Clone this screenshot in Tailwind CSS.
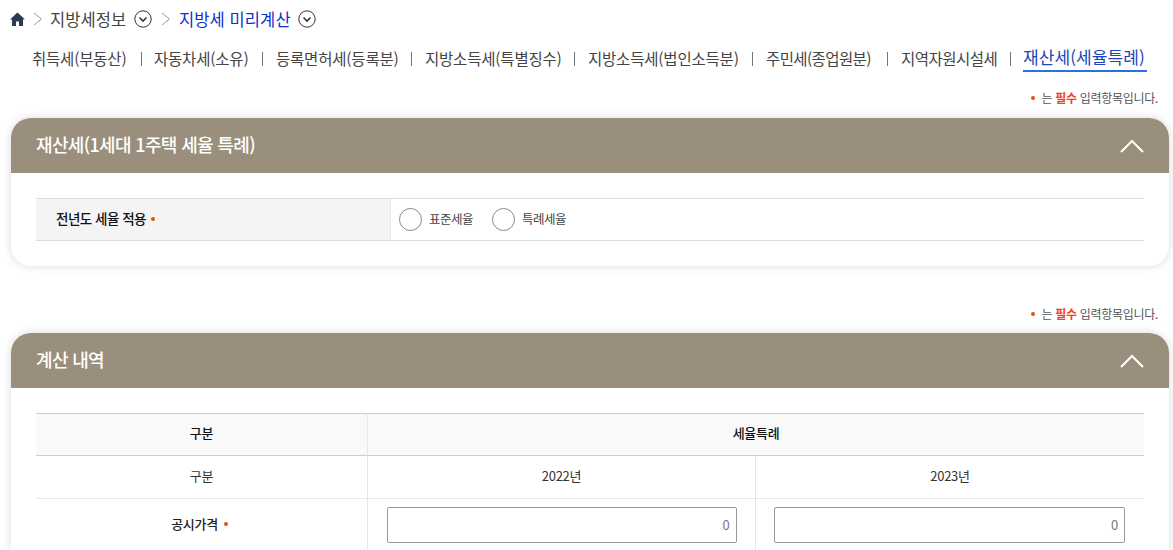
<!DOCTYPE html>
<html lang="ko">
<head>
  <meta charset="UTF-8" />
  <title>지방세 미리계산</title>
  <script src="https://cdn.jsdelivr.net/npm/@tailwindcss/browser@4"></script>
</head>
<body class="bg-white h-[550px] overflow-hidden font-['Noto_Sans_CJK_KR','Noto_Sans',sans-serif] text-[#333]">

  <!-- BREADCRUMB -->
  <nav class="flex items-center h-[38px] pl-[10px] text-[16.5px] whitespace-nowrap">
    <svg class="w-[15px] h-[14px] mr-[8px]" viewBox="0 0 15 14"><path d="M7.5 0.5 L15 7.5 H13 V14 H9 V9.5 H6 V14 H2 V7.5 H0 Z" fill="#2b3a55"/></svg>
    <svg class="w-[10px] h-[14px] mr-[7px]" viewBox="0 0 10 14"><path d="M1 1 L8.5 7 L1 13" fill="none" stroke="#999" stroke-width="1"/></svg>
    <span class="text-[#444] tracking-[0.1px] w-[78px]">지방세정보</span>
    <svg class="w-[18px] h-[18px] ml-[6px] mr-[9px]" viewBox="0 0 18 18"><circle cx="9" cy="9" r="8.2" fill="none" stroke="#333"/><path d="M5.5 7.5 L9 11 L12.5 7.5" fill="none" stroke="#333" stroke-width="1.6"/></svg>
    <svg class="w-[10px] h-[14px] mr-[8px]" viewBox="0 0 10 14"><path d="M1 1 L8.5 7 L1 13" fill="none" stroke="#999" stroke-width="1"/></svg>
    <span class="text-[#0b2fd0] tracking-[0.1px] w-[112px]">지방세 미리계산</span>
    <svg class="w-[18px] h-[18px] ml-[7px]" viewBox="0 0 18 18"><circle cx="9" cy="9" r="8.2" fill="none" stroke="#333"/><path d="M5.5 7.5 L9 11 L12.5 7.5" fill="none" stroke="#333" stroke-width="1.6"/></svg>
  </nav>

  <!-- TABS -->
  <div class="flex items-center h-[42px] pl-[32px] text-[15.5px] tracking-[-0.2px] text-[#444] whitespace-nowrap">
    <span class="w-[95px]">취득세(부동산)</span>
    <span class="w-px h-[14px] bg-[#777] ml-[14px] mr-[12px]"></span>
    <span class="w-[95px]">자동차세(소유)</span>
    <span class="w-px h-[14px] bg-[#777] ml-[13px] mr-[13px]"></span>
    <span class="w-[122px]">등록면허세(등록분)</span>
    <span class="w-px h-[14px] bg-[#777] ml-[13px] mr-[13px]"></span>
    <span class="w-[137px]">지방소득세(특별징수)</span>
    <span class="w-px h-[14px] bg-[#777] ml-[12px] mr-[13px]"></span>
    <span class="w-[150px]">지방소득세(법인소득분)</span>
    <span class="w-px h-[14px] bg-[#777] ml-[14px] mr-[13px]"></span>
    <span class="w-[108px] tracking-[-0.6px]">주민세(종업원분)</span>
    <span class="w-px h-[14px] bg-[#777] ml-[13px] mr-[13px]"></span>
    <span class="w-[97px] tracking-[-0.5px]">지역자원시설세</span>
    <span class="w-px h-[14px] bg-[#777] ml-[12px] mr-[12px]"></span>
    <span class="w-[124px] text-[17px] tracking-[0.1px] text-[#1c46b8] border-b-2 border-[#2f6fdc] h-[26px] leading-[22px]">재산세(세율특례)</span>
  </div>

  <main class="pl-[11px] pr-[4px]">
    <!-- REQUIRED NOTE -->
    <p class="flex items-center justify-end h-[36px] mb-[2px] pr-[11px] text-[12px] tracking-[-0.3px] text-[#555]">
      <span class="w-[4px] h-[4px] rounded-full bg-[#e8500f] mr-[6px]"></span>는&nbsp;<b class="text-[#f0431c]">필수</b>&nbsp;입력항목입니다.
    </p>

    <!-- RATE CARD -->
    <section class="rounded-[20px] shadow-[0_0_10px_rgba(0,0,0,0.15)] overflow-hidden bg-white">
      <header class="flex items-center justify-between h-[55px] bg-[#9a8f7d] px-[25px] text-white text-[18px] font-medium tracking-[-0.65px]">
        <span class="pb-[3px]">재산세(1세대 1주택 세율 특례)</span>
        <svg class="w-[24px] h-[14px]" viewBox="0 0 24 14"><path d="M1 13 L12 2 L23 13" fill="none" stroke="#fff" stroke-width="2"/></svg>
      </header>
      <div class="p-[25px]">
        <div class="flex h-[43px] border-y border-[#ddd] text-[13.5px] tracking-[-0.5px]">
          <div class="flex items-center w-[355px] pl-[20px] pb-[2px] bg-[#f4f4f4] border-r border-[#e6e6e6] font-medium text-[#111]">
            전년도 세율 적용<span class="w-[4px] h-[4px] rounded-full bg-[#e8500f] ml-[5px]"></span>
          </div>
          <div class="flex items-center pl-[8px] text-[12.5px] text-[#444]">
            <span class="w-[23px] h-[23px] rounded-full border border-[#888] mr-[7px]"></span>표준세율
            <span class="w-[23px] h-[23px] rounded-full border border-[#888] ml-[19px] mr-[7px]"></span>특례세율
          </div>
        </div>
      </div>
    </section>

    <p class="flex items-center justify-end h-[38px] mt-[29px] pr-[11px] text-[12px] tracking-[-0.3px] text-[#555]">
      <span class="w-[4px] h-[4px] rounded-full bg-[#e8500f] mr-[6px]"></span>는&nbsp;<b class="text-[#f0431c]">필수</b>&nbsp;입력항목입니다.
    </p>

    <!-- RESULT CARD -->
    <section class="rounded-t-[20px] shadow-[0_0_10px_rgba(0,0,0,0.15)] overflow-hidden bg-white h-[217px]">
      <header class="flex items-center justify-between h-[55px] bg-[#9a8f7d] px-[25px] text-white text-[18px] font-medium tracking-[-0.65px]">
        <span class="pb-[3px]">계산 내역</span>
        <svg class="w-[24px] h-[14px]" viewBox="0 0 24 14"><path d="M1 13 L12 2 L23 13" fill="none" stroke="#fff" stroke-width="2"/></svg>
      </header>
      <div class="px-[25px] pt-[25px]">
        <div class="grid grid-cols-[332px_388px_388px] text-[13px] text-center tracking-[-0.3px] text-[#333]">
          <div class="flex items-center justify-center h-[43px] pb-[4px] bg-[#f9f9f9] border-y border-[#ccc] border-r-[#e6e6e6] border-r font-medium text-[#111]">구분</div>
          <div class="col-span-2 flex items-center justify-center h-[43px] pb-[4px] bg-[#f9f9f9] border-y border-[#ccc] font-medium text-[#111]">세율특례</div>
          <div class="flex items-center justify-center h-[43px] pb-[3px] border-b border-r border-[#e6e6e6]">구분</div>
          <div class="flex items-center justify-center h-[43px] pb-[3px] border-b border-r border-[#e6e6e6]">2022년</div>
          <div class="flex items-center justify-center h-[43px] pb-[3px] border-b border-[#e6e6e6]">2023년</div>
          <div class="flex items-center justify-center h-[52px] pb-[3px] pr-[4px] border-r border-[#e6e6e6] font-medium text-[#222]">공시가격<span class="w-[4px] h-[4px] rounded-full bg-[#e8500f] ml-[6px]"></span></div>
          <div class="flex items-center justify-center h-[52px] border-r border-[#e6e6e6]">
            <div class="w-[350px] h-[36px] border border-[#999] rounded-[2px] flex items-center justify-end pr-[6px] text-[#777]">0</div>
          </div>
          <div class="flex items-center justify-start pl-[18px] h-[52px]">
            <div class="w-[351px] h-[36px] border border-[#999] rounded-[2px] flex items-center justify-end pr-[6px] text-[#777]">0</div>
          </div>
        </div>
      </div>
    </section>
  </main>
</body>
</html>
